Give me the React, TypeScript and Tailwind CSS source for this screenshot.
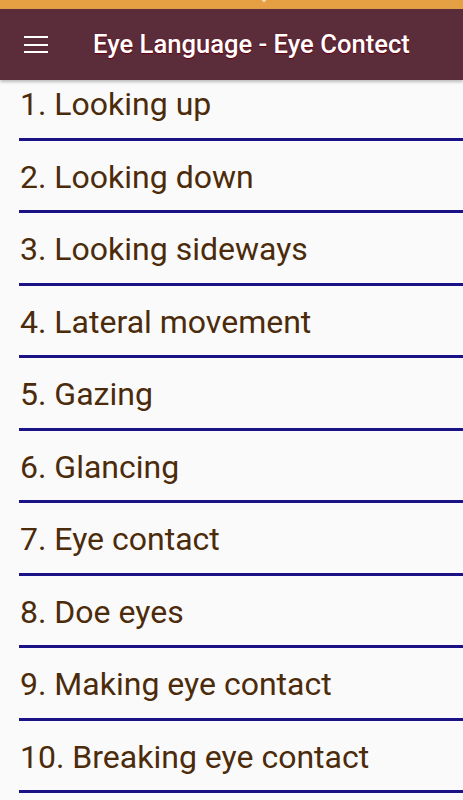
const ITEMS = [
  "1. Looking up",
  "2. Looking down",
  "3. Looking sideways",
  "4. Lateral movement",
  "5. Gazing",
  "6. Glancing",
  "7. Eye contact",
  "8. Doe eyes",
  "9. Making eye contact",
  "10. Breaking eye contact",
];

function App() {
  return (
    <div
      className="h-[800px] w-[463px] overflow-hidden bg-[#fafafa]"
      style={{ fontFamily: "Roboto, 'Noto Sans', sans-serif" }}
    >
      {/* status bar */}
      <div className="relative h-[9px] bg-[#e5a043]">
        <div className="absolute left-[262px] top-0 h-[2px] w-[4px] rounded-b bg-[#f6dcb5]" />
      </div>

      {/* toolbar */}
      <div className="relative z-10 flex h-[71px] items-center bg-[#5b2d3b] shadow-[0_2px_3px_rgba(0,0,0,0.25)]">
        <div className="ml-[24px] flex w-[24px] flex-col gap-[5.5px]">
          <div className="h-[2px] bg-white" />
          <div className="h-[2px] bg-white" />
          <div className="h-[2px] bg-white" />
        </div>
        <h1
          className="ml-[45px] text-[25.6px] font-medium text-white"
          style={{ textShadow: "0 0 1px #6b0010, 0 1px 1px #6b0010" }}
        >
          Eye Language - Eye Contect
        </h1>
      </div>

      {/* list, scrolled a little under the toolbar */}
      <div className="-mt-[10px] flex flex-col">
        {ITEMS.map((item) => (
          <div key={item} className="flex h-[72.5px] flex-col pl-[19px]">
            <div className="flex-1 pt-[13px] pl-[1px] text-[32px] leading-[42px] text-[#4c2b0b]">
              {item}
            </div>
            <div className="mb-[2px] h-[3px] bg-[#1b1285]" />
          </div>
        ))}
      </div>
    </div>
  );
}

export default App;
